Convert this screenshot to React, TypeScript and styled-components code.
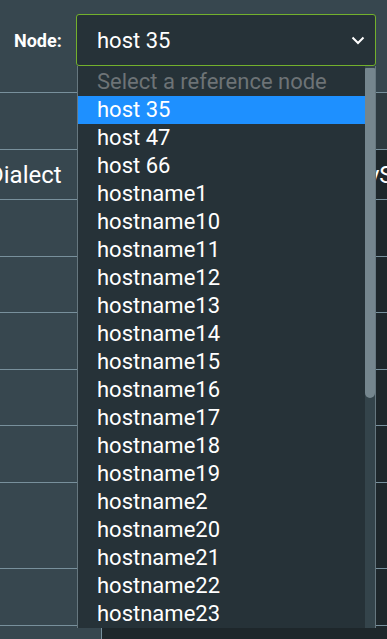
import React from 'react';
import styled, { createGlobalStyle } from 'styled-components';

const nodes = [
    'host 35',
    'host 47',
    'host 66',
    'hostname1',
    'hostname10',
    'hostname11',
    'hostname12',
    'hostname13',
    'hostname14',
    'hostname15',
    'hostname16',
    'hostname17',
    'hostname18',
    'hostname19',
    'hostname2',
    'hostname20',
    'hostname21',
    'hostname22',
    'hostname23',
    'hostname24',
    'hostname25',
];

// row heights of the table behind the open list
const rows = [56, 49, 56, 55, 56, 55, 56, 85, 56, 40];

const GlobalStyle = createGlobalStyle`
    html, body {
        margin: 0;
        padding: 0;
        background: #37474f;
        font-family: Roboto, 'Liberation Sans', sans-serif;
        overflow: hidden;
    }
`;

const Page = styled.div`
    display: flex;
    flex-direction: column;
    width: 387px;
    height: 639px;
    overflow: hidden;
    color: #ffffff;
`;

const Toolbar = styled.div`
    flex: none;
    display: flex;
    align-items: center;
    gap: 13px;
    padding: 14px 0 26px 14px;
`;

const Label = styled.label`
    font-size: 18px;
    font-weight: 700;
    width: 49px;
    white-space: nowrap;
`;

const SelectWrap = styled.div`
    position: relative;
    width: 300px;
    height: 52px;
    z-index: 2;
`;

const SelectBox = styled.div`
    display: flex;
    align-items: center;
    justify-content: space-between;
    height: 100%;
    box-sizing: border-box;
    padding: 0 10px 0 20px;
    background: #263238;
    border: 1px solid #73b02c;
    border-radius: 3px;
    font-size: 22px;
`;

const Chevron = styled.svg`
    width: 14px;
    height: 9px;
`;

const ListBox = styled.div`
    position: absolute;
    top: 52px;
    left: 1px;
    width: 299px;
    height: 562px;
    display: flex;
    box-sizing: border-box;
    background: #263238;
    border-left: 1px solid #66777f;
    border-right: 1px solid #66777f;
    overflow: hidden;
`;

const Options = styled.div`
    flex: 1;
    display: flex;
    flex-direction: column;
    padding-top: 2px;
    overflow: hidden;
`;

const Option = styled.div<{ $active?: boolean; $placeholder?: boolean }>`
    flex: none;
    height: 28px;
    line-height: 28px;
    padding-left: 19px;
    font-size: 22px;
    background: ${({ $active }) => ($active ? '#1e90ff' : 'transparent')};
    color: ${({ $placeholder }) => ($placeholder ? '#6d7376' : '#ffffff')};
    white-space: nowrap;
`;

const ScrollTrack = styled.div`
    width: 10px;
    background: #34444b;
    padding-top: 2px;
`;

const ScrollThumb = styled.div`
    height: 330px;
    background: #75868e;
    border-radius: 1px 1px 5px 5px;
`;

const Table = styled.div`
    flex: none;
    display: flex;
    flex-direction: column;
    border-top: 1px solid #78909c;
`;

const Row = styled.div<{ $h: number }>`
    display: flex;
    height: ${({ $h }) => $h}px;
    border-bottom: 1px solid #78909c;
    flex: none;
`;

const FirstCell = styled.div`
    width: 101px;
    flex: none;
    display: flex;
    align-items: center;
    border-right: 1px solid #78909c;
    font-size: 24px;
    text-indent: -12px;
    white-space: nowrap;
`;

const Cell = styled.div<{ $tone: 'mid' | 'dark' }>`
    flex: 1;
    display: flex;
    align-items: center;
    justify-content: flex-end;
    background: ${({ $tone }) => ($tone === 'mid' ? '#2d3a40' : '#1e272b')};
    font-size: 24px;
    white-space: nowrap;
    overflow: hidden;
`;

const HeadText = styled.span`
    margin-right: -48px;
`;

const App: React.FC = () => {
    return (
        <>
            <GlobalStyle />
            <Page>
                <Toolbar>
                    <Label>Node:</Label>
                    <SelectWrap>
                        <SelectBox>
                            <span>host 35</span>
                            <Chevron viewBox='0 0 14 9'>
                                <path
                                    d='M1.5 1.5 L7 7 L12.5 1.5'
                                    fill='none'
                                    stroke='#ffffff'
                                    strokeWidth='2'
                                />
                            </Chevron>
                        </SelectBox>
                        <ListBox>
                            <Options>
                                <Option $placeholder>Select a reference node</Option>
                                {nodes.map((node, i) => (
                                    <Option key={node} $active={i === 0}>
                                        {node}
                                    </Option>
                                ))}
                            </Options>
                            <ScrollTrack>
                                <ScrollThumb />
                            </ScrollTrack>
                        </ListBox>
                    </SelectWrap>
                </Toolbar>
                <Table>
                    {rows.map((h, i) => (
                        <Row key={i} $h={h}>
                            <FirstCell>{i === 1 ? 'Dialect' : ''}</FirstCell>
                            <Cell $tone={i === 0 ? 'mid' : 'dark'}>
                                {i === 1 && <HeadText>ReadyState</HeadText>}
                            </Cell>
                        </Row>
                    ))}
                </Table>
            </Page>
        </>
    );
};

export default App;
